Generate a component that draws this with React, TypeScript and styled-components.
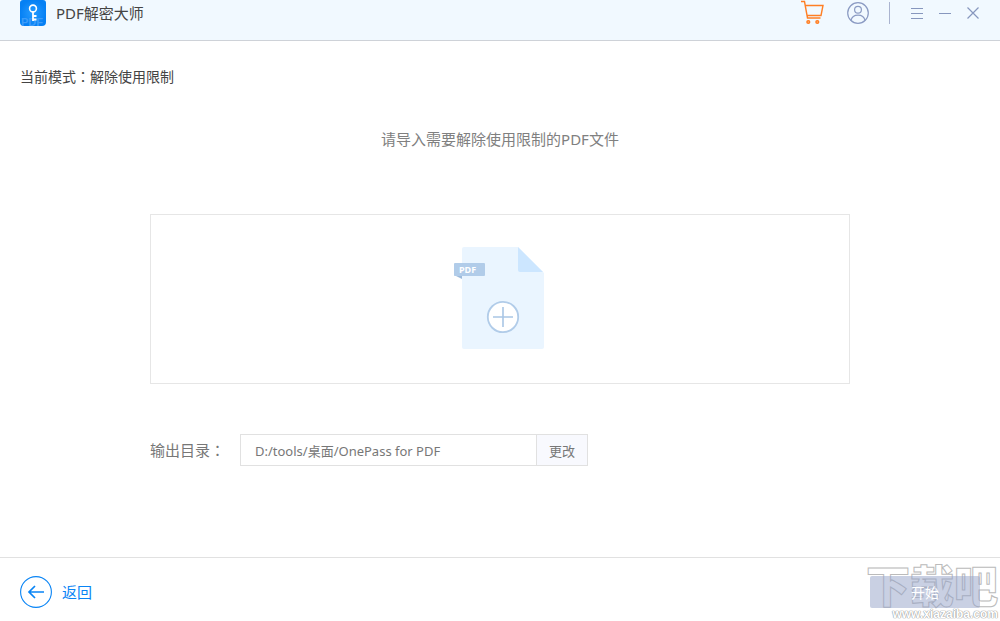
import React from 'react';
import styled, { createGlobalStyle } from 'styled-components';

const GlobalStyle = createGlobalStyle`
  * { box-sizing: border-box; }
  body {
    margin: 0;
    background: #fff;
    font-family: "Noto Sans", "Noto Sans CJK SC", sans-serif;
    font-size: 15px;
    color: #777;
  }
  button, input { font: inherit; color: inherit; }
  button { padding: 0; border: 0; background: none; cursor: pointer; }
  svg { display: block; }
`;

const Page = styled.div`
  display: flex;
  flex-direction: column;
  min-height: 100vh;
`;

const Header = styled.header`
  display: flex;
  align-items: center;
  justify-content: space-between;
  padding: 0 21px 14px 20px;
  border-bottom: 1px solid #ced2d8;
  background: #f1f9ff;
`;

const Brand = styled.div`
  display: flex;
  align-items: center;
  gap: 10px;
`;

const Title = styled.h1`
  margin: 0;
  font-size: 15px;
  font-weight: 400;
  line-height: 26px;
  color: #444;
`;

const Tools = styled.div`
  display: flex;
  align-items: center;
`;

const IconButton = styled.button<{ $gap?: number }>`
  margin-left: ${({ $gap = 0 }) => $gap}px;
`;

const Separator = styled.span`
  width: 1px;
  height: 22px;
  margin: 0 21px 0 20px;
  background: #aab4d0;
`;

const Main = styled.main`
  flex: 1;
  padding: 23px 20px;
`;

const Mode = styled.p`
  margin: 0;
  font-size: 14px;
  line-height: 24px;
  color: #444;
`;

const Colon = styled.span`
  font-family: "Noto Sans CJK TC", sans-serif;
`;

const Content = styled.div`
  width: 100%;
  max-width: 700px;
  margin: 37px auto 0;
`;

const Prompt = styled.p`
  margin: 0;
  line-height: 26px;
  text-align: center;
  color: #808080;
`;

const DropArea = styled.button`
  display: flex;
  justify-content: center;
  width: 100%;
  margin-top: 62px;
  padding: 32px 0 34px;
  border: 1px solid #e6e6e6;
`;

const OutputRow = styled.div`
  display: flex;
  align-items: center;
  margin-top: 50px;
`;

const OutputLabel = styled.label`
  width: 90px;
  line-height: 32px;
`;

const PathInput = styled.input`
  width: 296px;
  height: 32px;
  padding: 0 14px;
  border: 1px solid #e1e1e1;
  border-right: 0;
  border-radius: 0;
  outline: 0;
  background: #fff;
  font-size: 13px;
`;

const ChangeButton = styled.button`
  width: 52px;
  height: 32px;
  border: 1px solid #e1e1e1;
  background: #f8f9fe;
  font-size: 13px;
`;

const Footer = styled.footer`
  position: relative;
  display: flex;
  align-items: center;
  justify-content: space-between;
  padding: 18px 20px 13px;
  border-top: 1px solid #e1e1e1;
`;

const BackButton = styled.button`
  display: flex;
  align-items: center;
  gap: 10px;
  line-height: 20px;
  color: #0984f5;
`;

const StartButton = styled.button`
  position: relative;
  z-index: 1;
  width: 110px;
  height: 32px;
  border-radius: 2px;
  background: rgba(147, 161, 199, 0.5);
  color: #fff;
  font-size: 14px;
`;

const Watermark = styled.div`
  position: absolute;
  top: 6px;
  right: 2px;
  pointer-events: none;
  text-align: right;
  white-space: nowrap;
`;

const WatermarkName = styled.div`
  font-size: 44px;
  font-weight: 900;
  line-height: 44px;
  color: #fff;
  -webkit-text-stroke: 1px #bbb;
`;

const WatermarkSite = styled.div`
  font-family: "Liberation Sans", sans-serif;
  font-size: 12px;
  font-weight: 700;
  line-height: 12px;
  color: #fff;
  text-shadow: 0 0 1px #999, 0 0 1px #999, 0 0 1px #aaa;
`;

const Logo = () => (
  <svg width="26" height="26" viewBox="0 0 26 26" aria-hidden="true">
    <defs>
      <radialGradient id="logo-glow">
        <stop offset="0" stopColor="#279cff" />
        <stop offset="1" stopColor="#0580f4" />
      </radialGradient>
    </defs>
    <path d="M0 3a3 3 0 0 1 3-3h20a3 3 0 0 1 3 3v19a4 4 0 0 1-4 4H4a4 4 0 0 1-4-4z" fill="url(#logo-glow)" />
    <text x="1" y="26" fontFamily="Liberation Sans" fontSize="11" fontWeight="700" fill="#3d9cf8">PDF</text>
    <g fill="none" stroke="#fff">
      <circle cx="13" cy="8.5" r="3.4" strokeWidth="1.6" />
      <path d="M13 12v9M13 16h3.500M13 19.500h3.500" strokeWidth="1.800" />
    </g>
  </svg>
);

const Cart = () => (
  <svg width="24" height="26" viewBox="0 0 24 26" fill="none" stroke="#ff7f24" strokeWidth="1.400" aria-hidden="true">
    <path d="M1 1.500h3.500l3 16.500H20.500M4.800 5.500H23L21 15.500H7.200" />
    <circle cx="8.300" cy="22" r="1.400" fill="#ffae74" />
    <circle cx="17.300" cy="22" r="1.400" fill="#ffae74" />
  </svg>
);

const User = () => (
  <svg width="22" height="26" viewBox="0 0 22 26" fill="none" stroke="#8b9bc3" strokeWidth="1.200" aria-hidden="true">
    <circle cx="11" cy="13" r="10.300" />
    <circle cx="11" cy="9.800" r="3.400" />
    <path d="M4 20.500c.7-3.400 3.400-5.300 7-5.300s6.300 1.900 7 5.300" />
  </svg>
);

const Menu = () => (
  <svg width="12" height="26" viewBox="0 0 12 26" stroke="#8797be" aria-hidden="true">
    <path d="M0 8.500h12M0 13.500h12M0 18.500h12" />
  </svg>
);

const Minimize = () => (
  <svg width="12" height="26" viewBox="0 0 12 26" stroke="#8797be" aria-hidden="true">
    <path d="M0 13.500h12" />
  </svg>
);

const Close = () => (
  <svg width="12" height="26" viewBox="0 0 12 26" stroke="#8797be" strokeWidth="1.200" aria-hidden="true">
    <path d="M.5 7.500l11 11M11.500 7.500l-11 11" />
  </svg>
);

const PdfFile = () => (
  <svg width="92" height="102" viewBox="0 0 92 102" aria-hidden="true">
    <path d="M10 0h54l26 26v74a2 2 0 0 1-2 2H10a2 2 0 0 1-2-2V2a2 2 0 0 1 2-2z" fill="#eaf5ff" />
    <path d="M64 0l25 25H66a2 2 0 0 1-2-2z" fill="#cce6ff" />
    <path d="M0 28l8 4v-4z" fill="#9dbbdc" />
    <rect y="16" width="31" height="13" rx="1" fill="#b1cce9" />
    <text x="5" y="26" fontFamily="Noto Sans" fontSize="9" fontWeight="700" fill="#fff">PDF</text>
    <circle cx="49" cy="70" r="15.200" fill="#fff" stroke="#b1cce9" strokeWidth="1.800" />
    <path d="M39 70h20M49 60v20" stroke="#a9c6e5" strokeWidth="1.600" />
  </svg>
);

const BackArrow = () => (
  <svg width="32" height="32" viewBox="0 0 32 32" fill="none" stroke="#0984f5" aria-hidden="true">
    <circle cx="16" cy="16" r="15.400" strokeWidth="1.100" />
    <path d="M24 16H9M15 10l-6 6 6 6" strokeWidth="1.700" />
  </svg>
);

export default function App() {
  return (
    <Page>
      <GlobalStyle />
      <Header>
        <Brand>
          <Logo />
          <Title>PDF解密大师</Title>
        </Brand>
        <Tools>
          <IconButton aria-label="购物车"><Cart /></IconButton>
          <IconButton $gap={23} aria-label="用户"><User /></IconButton>
          <Separator />
          <IconButton aria-label="菜单"><Menu /></IconButton>
          <IconButton $gap={16} aria-label="最小化"><Minimize /></IconButton>
          <IconButton $gap={16} aria-label="关闭"><Close /></IconButton>
        </Tools>
      </Header>
      <Main>
        <Mode>当前模式<Colon>：</Colon>解除使用限制</Mode>
        <Content>
          <Prompt>请导入需要解除使用限制的PDF文件</Prompt>
          <DropArea aria-label="添加文件"><PdfFile /></DropArea>
          <OutputRow>
            <OutputLabel htmlFor="output">输出目录<Colon>：</Colon></OutputLabel>
            <PathInput id="output" readOnly value="D:/tools/桌面/OnePass for PDF" />
            <ChangeButton>更改</ChangeButton>
          </OutputRow>
        </Content>
      </Main>
      <Footer>
        <BackButton><BackArrow />返回</BackButton>
        <StartButton disabled>开始</StartButton>
        <Watermark>
          <WatermarkName>下载吧</WatermarkName>
          <WatermarkSite>www.xiazaiba.com</WatermarkSite>
        </Watermark>
      </Footer>
    </Page>
  );
}
